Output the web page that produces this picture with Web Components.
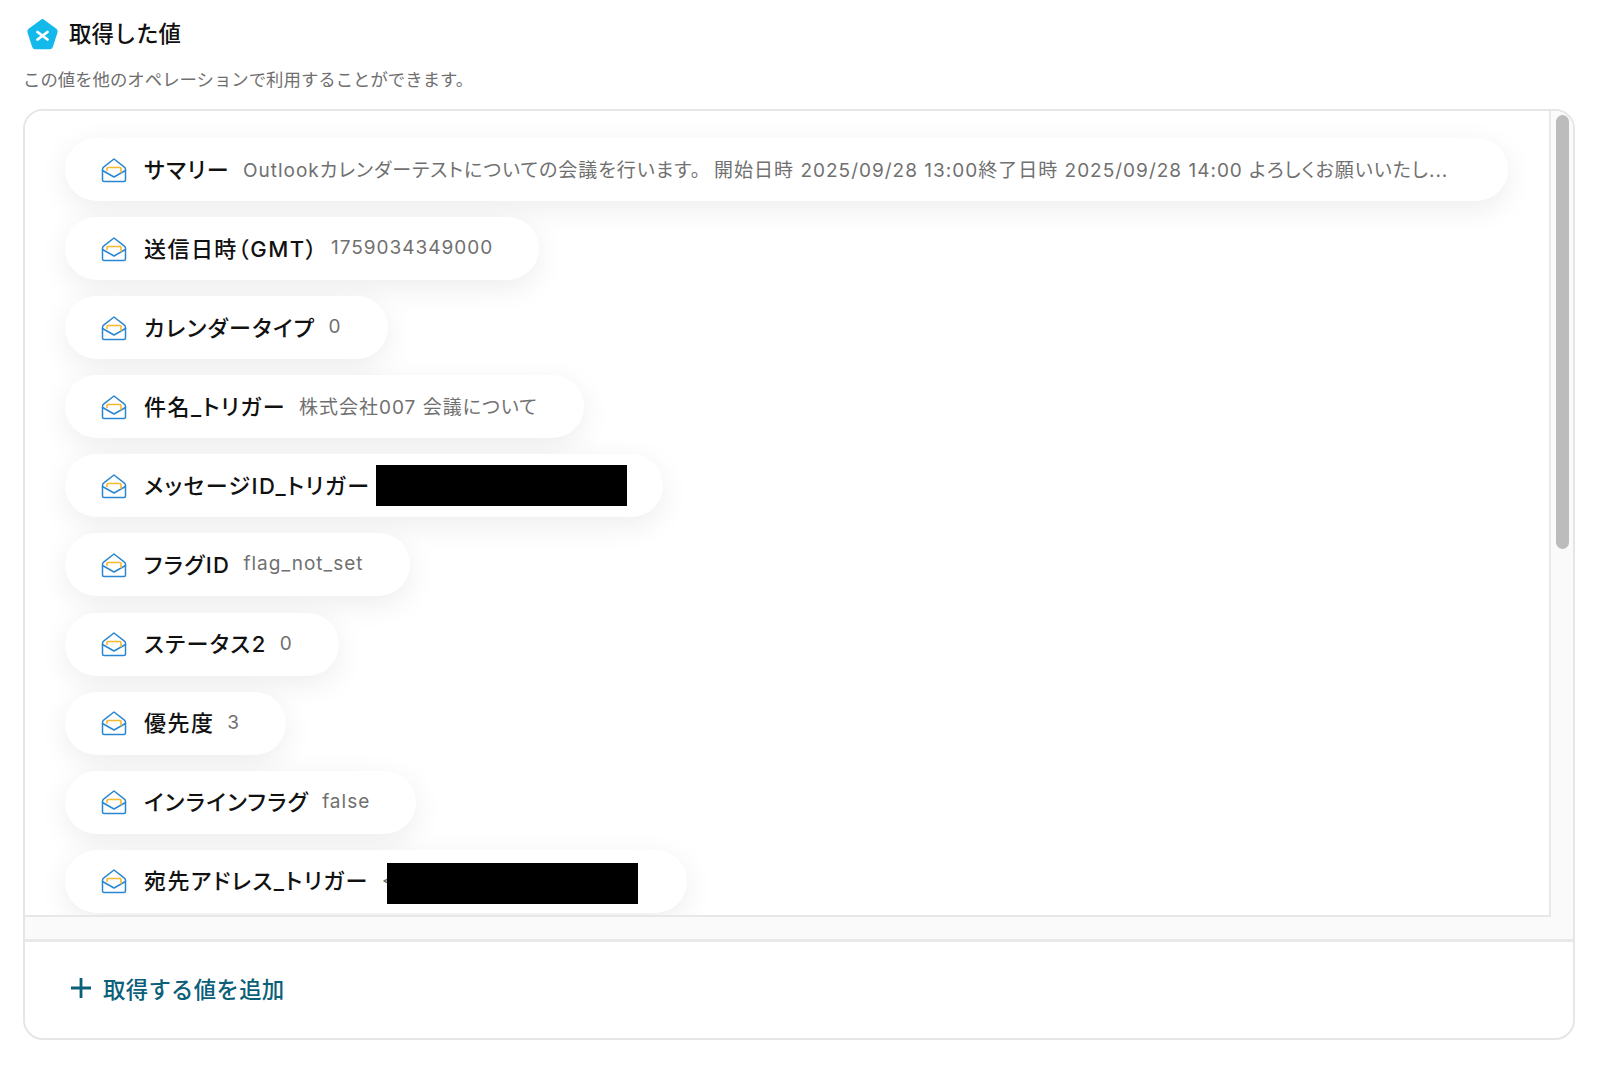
<!DOCTYPE html>
<html lang="ja">
<head>
<meta charset="utf-8">
<title>取得した値</title>
<style>
    html, body { margin: 0; background: #fff; }
    body { font-family: Inter, "Noto Sans CJK JP", sans-serif; }
</style>
</head>
<body>
<output-panel>
    <value-chip style="padding-right: 60px" label="サマリー" value="Outlookカレンダーテストについての会議を行います。開始日時 2025/09/28 13:00終了日時 2025/09/28 14:00 よろしくお願いいたし..."></value-chip>
    <value-chip label="送信日時（GMT）" value="1759034349000"></value-chip>
    <value-chip label="カレンダータイプ" value="0"></value-chip>
    <value-chip label="件名_トリガー" value="株式会社007 会議について"></value-chip>
    <value-chip style="padding-right: 36px" label="メッセージID_トリガー" redacted="251"></value-chip>
    <value-chip label="フラグID" value="flag_not_set"></value-chip>
    <value-chip label="ステータス2" value="0"></value-chip>
    <value-chip label="優先度" value="3"></value-chip>
    <value-chip label="インラインフラグ" value="false"></value-chip>
    <value-chip style="padding-right: 49px" label="宛先アドレス_トリガー" value="&lt;" redacted="251"></value-chip>
</output-panel>

<script>
// value-chip - one fetched value, shown as a pill with a mail icon
class ValueChip extends HTMLElement {
    constructor() {
        super();
        this.attachShadow({ mode: 'open' });
    }

    connectedCallback() {
        const label = this.getAttribute('label') || '';
        const value = this.getAttribute('value');
        const redacted = this.getAttribute('redacted');
        const lap = value && redacted;
        const valueHtml = (value || '').replace(/</g, '&lt;').replace(/。/g, '<span class="kuten">。</span>');
        this.shadowRoot.innerHTML = `
            <style>
                :host {
                    display: flex;
                    align-items: center;
                    flex: none;
                    height: 63px;
                    width: fit-content;
                    box-sizing: border-box;
                    padding: 0 46px 0 36px;
                    background: #fff;
                    border-radius: 32px;
                    box-shadow: 0 8px 30px rgba(0,0,0,0.075);
                }
                svg { flex: none; width: 26px; height: 26px; margin-right: 17px; }
                .label {
                    font-size: 22px;
                    font-weight: 500;
                    letter-spacing: 1.45px;
                    color: #111;
                    white-space: nowrap;
                    margin-right: 13px;
                    padding-bottom: 4px;
                    font-feature-settings: "palt";
                }
                .value {
                    font-size: 19px;
                    letter-spacing: 1px;
                    color: #707070;
                    white-space: nowrap;
                    padding-bottom: 2px;
                    font-feature-settings: "palt";
                }
                .kuten { margin-right: 13px; }
                .redact {
                    flex: none;
                    height: 41px;
                    background: #000;
                    margin-left: ${lap ? '-8px' : '-7px'};
                    margin-top: ${lap ? '5px' : '0'};
                }
            </style>
            <svg viewBox="0 0 26 26" fill="none" stroke-linejoin="round" stroke-linecap="round">
                <path d="M1.5 12.5 Q1.5 11 2.6 10.2 L13 2 L23.4 10.2 Q24.5 11 24.5 12.5 V23 Q24.5 24.5 23 24.5 H3 Q1.5 24.5 1.5 23 Z" stroke="#2b86d1" stroke-width="1.5"/>
                <path d="M1.5 13.5 L13 20 L24.5 13.5" stroke="#2b86d1" stroke-width="1.5"/>
                <path d="M6 13.5 V11.5 Q6 10.5 7 10.5 H19 Q20 10.5 20 11.5 V15.5" stroke="#f7b731" stroke-width="1.6"/>
            </svg>
            <span class="label">${label}</span>
            ${value ? `<span class="value">${valueHtml}</span>` : ''}
            ${redacted ? `<span class="redact" style="width:${redacted}px"></span>` : ''}
        `;
    }
}

// output-panel - heading, scrolling list of chips and the add action
class OutputPanel extends HTMLElement {
    constructor() {
        super();
        this.attachShadow({ mode: 'open' });
    }

    connectedCallback() {
        this.shadowRoot.innerHTML = `
            <style>
                :host {
                    display: block;
                    box-sizing: border-box;
                    height: 1075px;
                    padding: 15px 25px 0 23px;
                    overflow: hidden;
                    font-family: Inter, "Noto Sans CJK JP", sans-serif;
                }
                .head { display: flex; align-items: center; gap: 10px; height: 38px; padding-left: 3px; }
                .head svg { width: 33px; height: 33px; flex: none; }
                h2 { margin: 0; font-size: 22.4px; font-weight: 500; color: #111; line-height: 1; }
                p { margin: 14px 0 0; font-size: 17.4px; line-height: 26px; color: #6f6f6f; }
                .box {
                    margin-top: 16px;
                    height: 931px;
                    box-sizing: border-box;
                    border: 2px solid #e6e6e6;
                    border-radius: 20px;
                    overflow: hidden;
                    display: flex;
                    flex-direction: column;
                }
                .well {
                    flex: none;
                    height: 831px;
                    display: flex;
                    background: #fafafa;
                    border-bottom: 3px solid #e8e8e8;
                    box-sizing: border-box;
                }
                .scroll {
                    flex: 1;
                    height: 806px;
                    box-sizing: border-box;
                    background: #fff;
                    border-right: 2px solid #e8e8e8;
                    border-bottom: 2px solid #e8e8e8;
                    overflow: hidden;
                    padding: 27px 0 0 40px;
                    display: flex;
                    flex-direction: column;
                    gap: 16.1px;
                }
                .track { flex: none; width: 22px; padding: 4px 4px 0 5px; box-sizing: border-box; }
                .thumb { height: 434px; background: #bcbcbc; border-radius: 7px; }
                .add {
                    flex: 1;
                    display: flex;
                    align-items: center;
                    gap: 11px;
                    padding: 0 0 4px 45px;
                    font-size: 22.4px;
                    font-weight: 500;
                    letter-spacing: 0.3px;
                    color: #0b6079;
                }
                .add svg { width: 22px; height: 22px; flex: none; }
            </style>
            <div class="head">
                <svg viewBox="0 0 33 33">
                    <path d="M16.5 2.5 L29.5 12 Q30.5 12.8 30.1 14 L25.4 28.5 Q25 29.8 23.6 29.8 H9.4 Q8 29.8 7.6 28.5 L2.9 14 Q2.5 12.8 3.5 12 Z" fill="#12b9ea" stroke="#12b9ea" stroke-width="3" stroke-linejoin="round"/>
                    <path d="M11.5 14 L21.5 21.5 M21.5 14 L11.5 21.5" stroke="#fff" stroke-width="2.8" stroke-linecap="round"/>
                </svg>
                <h2>取得した値</h2>
            </div>
            <p>この値を他のオペレーションで利用することができます。</p>
            <div class="box">
                <div class="well">
                    <div class="scroll"><slot></slot></div>
                    <div class="track"><div class="thumb"></div></div>
                </div>
                <div class="add">
                    <svg viewBox="0 0 22 22"><path d="M11 1 V21 M1 11 H21" stroke="#0b6079" stroke-width="2.8"/></svg>
                    <span>取得する値を追加</span>
                </div>
            </div>
        `;
    }
}

customElements.define('value-chip', ValueChip);
customElements.define('output-panel', OutputPanel);
</script>
</body>
</html>
